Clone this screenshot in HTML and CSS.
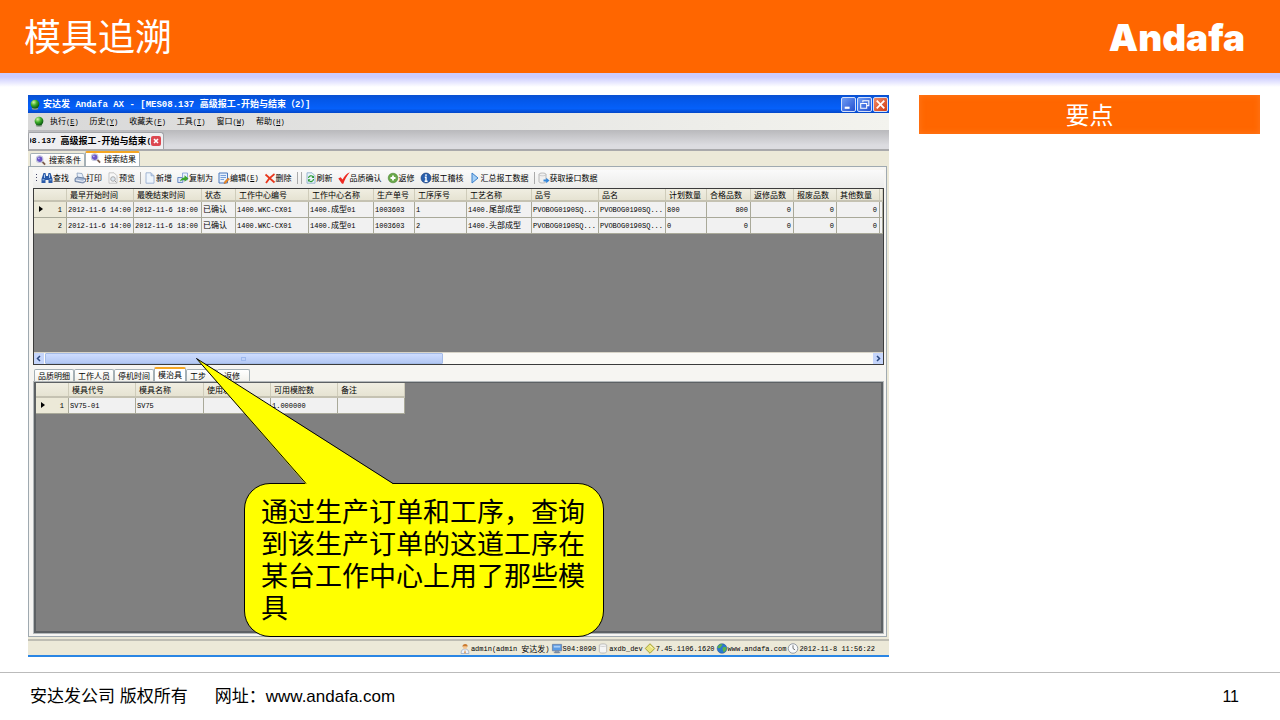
FILE: index.html
```html
<!DOCTYPE html>
<html lang="zh-CN">
<head>
<meta charset="utf-8">
<title>模具追溯</title>
<link rel="stylesheet" href="styles.css">
</head>
<body>
<svg class="defs" aria-hidden="true">
  <defs>
    <radialGradient id="ball" cx=".35" cy=".3" r=".7"><stop offset="0" stop-color="#d5f5a8"/><stop offset=".5" stop-color="#3fae2a"/><stop offset="1" stop-color="#0c5a12"/></radialGradient>
    <symbol id="i-app" viewBox="0 0 12 12"><ellipse cx="6" cy="10.5" rx="3.5" ry="1.2" fill="#8a9a8a"/><circle cx="6" cy="5.5" r="4.8" fill="url(#ball)"/></symbol>
    <symbol id="i-search" viewBox="0 0 12 12"><path d="M6.5 6.5l4 4" stroke="#7a5a4a" stroke-width="2"/><circle cx="4.5" cy="4.5" r="3.6" fill="#6a55c8" stroke="#c4c8dc" stroke-width="1.2"/><circle cx="3.6" cy="3.6" r="1" fill="#b9b0f4"/></symbol>
    <symbol id="i-find" viewBox="0 0 12 12"><path d="M2.5 1h2l.6 3h1.800l.6-3h2l2 6v4H7.500V8h-3v3H.5V7z" fill="#2a5aa8"/><path d="M1.500 7.800h2M8.500 7.800h2M3.500 2.500v3.500M8.500 2.500v3.500" stroke="#a9ccf2"/></symbol>
    <symbol id="i-print" viewBox="0 0 12 12"><path d="M3 1l5 .5L9.500 6h-6z" fill="#e8f0fa" stroke="#7c93b5" stroke-width=".7"/><path d="M1 6.500L3.500 5l8 1.500v3L9 11 1 9.500z" fill="#a6b8d4" stroke="#4d6286" stroke-width=".7"/><path d="M2 8l6.500 1.300 2.500-1" stroke="#fff" stroke-width=".8" fill="none"/></symbol>
    <symbol id="i-page" viewBox="0 0 12 12"><path d="M2 .8h5l3 3v7.400H2z" fill="#eef5fd" stroke="#8fa7cc" stroke-width=".8"/><path d="M7 .8v3h3" fill="#bdd0ec" stroke="#8fa7cc" stroke-width=".7"/></symbol>
    <symbol id="i-preview" viewBox="0 0 12 12"><path d="M2 .8h5l3 3v7.400H2z" fill="#f8f8f8" stroke="#bbb" stroke-width=".8"/><circle cx="6" cy="7" r="2.300" fill="#dde6ee" stroke="#999" stroke-width=".8"/><path d="M7.500 8.500l2 2" stroke="#999"/></symbol>
    <symbol id="i-copy" viewBox="0 0 12 12"><path d="M.8 5.500h5v5h-5z" fill="#dbe7fa" stroke="#4c74b8" stroke-width=".8"/><path d="M5.500 1h5v7h-5z" fill="#eaf2fd" stroke="#7d9bd0" stroke-width=".8"/><path d="M3 9.500c1-3.500 3-4 4.500-4V3.200L11.500 6.500 7.500 9.800V8C6 8 4.500 8 3 9.500z" fill="#3da52c"/></symbol>
    <symbol id="i-edit" viewBox="0 0 12 12"><path d="M1 1h8.500v10H1z" fill="#e7f0fc" stroke="#4b78bd"/><path d="M2.500 3.500H8M2.500 5.500H8M2.500 7.500H6" stroke="#5c8bd0" stroke-width=".8"/><path d="M11.500 7L8 11l-2 .8.500-2L10 6z" fill="#ee8a24" stroke="#b65c10" stroke-width=".4"/></symbol>
    <symbol id="i-del" viewBox="0 0 12 12"><path d="M1.500 2.500l9 8M10.500 2C7 4.500 4 7.500 2 11" stroke="#e8371c" stroke-width="1.700" fill="none"/></symbol>
    <symbol id="i-refresh" viewBox="0 0 12 12"><path d="M2 .8h5l3 3v7.400H2z" fill="#eaf4fb" stroke="#86a8c8" stroke-width=".8"/><path d="M3.500 6A2.500 2.500 0 0 1 8 4.800M8.500 7A2.500 2.500 0 0 1 4 8.500" stroke="#2c9a35" stroke-width="1.200" fill="none"/><path d="M9 3.500v2.600H6.500zM3 10V7.300h2.600z" fill="#2c9a35"/></symbol>
    <symbol id="i-check" viewBox="0 0 12 12"><path d="M.3 6.500l2.300-1.300 2 2.300C6.300 4.300 8.300 1.800 11.800.2 8.800 4 6.800 7.500 5.300 11.800H4z" fill="#ee2a22"/></symbol>
    <symbol id="i-plus" viewBox="0 0 12 12"><circle cx="6" cy="6" r="4.800" fill="#6aa84a" stroke="#4c8534" stroke-width=".6"/><path d="M6 3.500v5M3.500 6h5" stroke="#fff" stroke-width="1.800"/></symbol>
    <symbol id="i-info" viewBox="0 0 12 12"><circle cx="6" cy="6" r="5" fill="#285fae" stroke="#16386e" stroke-width=".6"/><path d="M6 2.300v1.700M4.800 5.300H6v4M4.600 9.300h3" stroke="#fff" stroke-width="1.400" fill="none"/></symbol>
    <symbol id="i-play" viewBox="0 0 9 12"><path d="M1.500 1v10L7.500 6z" fill="#a5d0f7" stroke="#3b7fca"/></symbol>
    <symbol id="i-get" viewBox="0 0 12 12"><path d="M1 2.500C1 .5 8 .5 8 2.500v7c0 2-7 2-7 0z" fill="#f0f0f0" stroke="#aaa" stroke-width=".8"/><path d="M1 2.500c0 1.700 7 1.700 7 0" fill="none" stroke="#bbb" stroke-width=".7"/><path d="M5.500 7.500h2.700V5.700L11.500 8.500 8.200 11.300V9.600H5.500z" fill="#3587d9"/></symbol>
    <symbol id="i-user" viewBox="0 0 12 12"><path d="M1.800 11.500c0-4 2-5 4.200-5s4.200 1 4.200 5z" fill="#eef2fa" stroke="#8797b5" stroke-width=".7"/><circle cx="6" cy="4" r="2.500" fill="#f5c793"/><path d="M3.200 4C3 .5 9 .2 8.900 3.700 7 3.800 5 3 3.200 4z" fill="#c9792f"/><path d="M6 7l-.8 3.500.8 1 .8-1z" fill="#d9802b"/></symbol>
    <symbol id="i-pc" viewBox="0 0 12 12"><path d="M1 1.500h10v7H1z" fill="#5b9be4" stroke="#6f86a8"/><path d="M2.500 3h7v2h-7z" fill="#a9cdf5"/><path d="M4 9h4v1.500H4zM2.500 10.500h7" stroke="#7688a0" fill="#a9b6c8"/></symbol>
    <symbol id="i-db" viewBox="0 0 12 12"><path d="M2 2.500c0-2 8-2 8 0v7c0 2-8 2-8 0z" fill="#f5f5f5" stroke="#aaa" stroke-width=".8"/><path d="M2 2.500c0 1.700 8 1.700 8 0" fill="none" stroke="#bbb" stroke-width=".7"/></symbol>
    <symbol id="i-tag" viewBox="0 0 12 12"><path d="M6 .8L11.200 6 6 11.200.8 6z" fill="#e9e37c" stroke="#9c9a2c"/><path d="M6 3L9 6" stroke="#fffbd0"/></symbol>
    <symbol id="i-globe" viewBox="0 0 12 12"><circle cx="6" cy="6" r="5.300" fill="#2c78cf" stroke="#1c4b86" stroke-width=".5"/><path d="M2 3c2-2 4-2 4.500-1.200C6 3 5 3.500 4.500 5 3.500 6 2 5.500 1.200 5.500zM7 5c2-1 3.500-.5 3.800.8C10.500 8.500 9 10 7.800 10 7 8.500 6 6.500 7 5z" fill="#5cb548"/></symbol>
    <symbol id="i-clock" viewBox="0 0 12 12"><circle cx="6" cy="6" r="5.200" fill="#f7f9fb" stroke="#8c949e"/><path d="M6 2.500V6l2.300 1.500" stroke="#444" fill="none" stroke-width=".8"/></symbol>
  </defs>
</svg>

<div class="slide">
  <header class="banner">
    <h1>模具追溯</h1>
    <div class="brand">Andafa</div>
  </header>

  <main class="content">
    <section class="shot">
      <div class="window">
        <div class="titlebar">
          <svg class="ic"><use href="#i-app"/></svg>
          <span class="caption">安达发<span class="lat"> Andafa AX - [MES08.137 </span>高级报工<span class="lat">-</span>开始与结束（<span class="lat">2</span>）<span class="lat">]</span></span>
          <button class="wb" aria-label="最小化"><svg viewBox="0 0 12 12"><path d="M2.500 9h4.500" stroke="#fff" stroke-width="2"/></svg></button>
          <button class="wb" aria-label="还原"><svg viewBox="0 0 12 12"><path d="M4.500 4V2.500H10V7H8.500M2.500 5H8v4.500H2.500z" stroke="#fff" fill="none"/></svg></button>
          <button class="wb close" aria-label="关闭"><svg viewBox="0 0 12 12"><path d="M2.500 2.500l7 7M9.500 2.500l-7 7" stroke="#fff" stroke-width="1.600"/></svg></button>
        </div>

        <nav class="menubar">
          <svg class="ic"><use href="#i-app"/></svg>
          <button>执行<span class="lat">(<u>E</u>)</span></button>
          <button>历史<span class="lat">(<u>Y</u>)</span></button>
          <button>收藏夹<span class="lat">(<u>F</u>)</span></button>
          <button>工具<span class="lat">(<u>T</u>)</span></button>
          <button>窗口<span class="lat">(<u>W</u>)</span></button>
          <button>帮助<span class="lat">(<u>H</u>)</span></button>
        </nav>

        <div class="doctabs">
          <div class="doctab">
            <span class="doctext"><span class="lat">08.137 </span>高级报工<span class="lat">-</span>开始与结束<span class="lat">(</span></span>
            <button class="tabclose" aria-label="关闭标签"><svg viewBox="0 0 10 10"><path d="M3 3l4 4M7 3l-4 4" stroke="#fff" stroke-width="1.600"/></svg></button>
          </div>
        </div>

        <div class="tabs main-tabs">
          <button class="tab"><svg class="ic"><use href="#i-search"/></svg>搜索条件</button>
          <button class="tab on"><svg class="ic"><use href="#i-search"/></svg>搜索结果</button>
        </div>

        <div class="panel">
          <div class="toolbar">
            <span class="grip"></span>
            <button><svg class="ic"><use href="#i-find"/></svg>查找</button>
            <button><svg class="ic"><use href="#i-print"/></svg>打印</button>
            <button><svg class="ic"><use href="#i-preview"/></svg>预览</button>
            <span class="sep"></span>
            <button><svg class="ic"><use href="#i-page"/></svg>新增</button>
            <button><svg class="ic"><use href="#i-copy"/></svg>复制为</button>
            <button><svg class="ic"><use href="#i-edit"/></svg>编辑<span class="lat">(<u>E</u>)</span></button>
            <button><svg class="ic"><use href="#i-del"/></svg>删除</button>
            <span class="sep double"></span>
            <button><svg class="ic"><use href="#i-refresh"/></svg>刷新</button>
            <button><svg class="ic"><use href="#i-check"/></svg>品质确认</button>
            <button><svg class="ic"><use href="#i-plus"/></svg>返修</button>
            <button><svg class="ic"><use href="#i-info"/></svg>报工稽核</button>
            <button><svg class="ic"><use href="#i-play"/></svg>汇总报工数据</button>
            <span class="sep"></span>
            <button><svg class="ic"><use href="#i-get"/></svg>获取接口数据</button>
          </div>

          <div class="grid upper">
            <table>
              <colgroup><col class="w33"><col class="w67"><col class="w68"><col class="w34"><col class="w73"><col class="w65"><col class="w41"><col class="w52"><col class="w65"><col class="w67"><col class="w67"><col class="w41"><col class="w44"><col class="w43"><col class="w43"><col class="w43"><col></colgroup>
              <thead><tr><th></th><th>最早开始时间</th><th>最晚结束时间</th><th>状态</th><th>工作中心编号</th><th>工作中心名称</th><th>生产单号</th><th>工序序号</th><th>工艺名称</th><th>品号</th><th>品名</th><th>计划数量</th><th>合格品数</th><th>返修品数</th><th>报废品数</th><th>其他数量</th><th></th></tr></thead>
              <tbody>
                <tr><th class="cur">1</th><td>2012-11-6 14:00</td><td>2012-11-6 18:00</td><td><span class="cjk">已确认</span></td><td>1400.WKC-CX01</td><td>1400.<span class="cjk">成型</span>01</td><td>1003603</td><td>1</td><td>1400.<span class="cjk">尾部成型</span></td><td>PVOBOG0190SQ...</td><td>PVOBOG0190SQ...</td><td>800</td><td class="num">800</td><td class="num">0</td><td class="num">0</td><td class="num">0</td><td></td></tr>
                <tr><th>2</th><td>2012-11-6 14:00</td><td>2012-11-6 18:00</td><td><span class="cjk">已确认</span></td><td>1400.WKC-CX01</td><td>1400.<span class="cjk">成型</span>01</td><td>1003603</td><td>2</td><td>1400.<span class="cjk">头部成型</span></td><td>PVOBOG0190SQ...</td><td>PVOBOG0190SQ...</td><td>0</td><td class="num">0</td><td class="num">0</td><td class="num">0</td><td class="num">0</td><td></td></tr>
              </tbody>
            </table>
            <div class="scroll">
              <button aria-label="向左滚动"><svg viewBox="0 0 10 10"><path d="M6 2.500L3.500 5 6 7.500" stroke="#2d4a80" stroke-width="1.500" fill="none"/></svg></button>
              <div class="track"><div class="thumb"><i></i></div></div>
              <button aria-label="向右滚动"><svg viewBox="0 0 10 10"><path d="M4 2.500L6.500 5 4 7.500" stroke="#2d4a80" stroke-width="1.500" fill="none"/></svg></button>
            </div>
          </div>

          <div class="tabs sub-tabs">
            <button class="tab">品质明细</button>
            <button class="tab">工作人员</button>
            <button class="tab">停机时间</button>
            <button class="tab on">模治具</button>
            <button class="tab">工步</button>
            <button class="tab">返修</button>
          </div>

          <div class="grid lower">
            <table>
              <colgroup><col class="w33"><col class="w67"><col class="w68"><col class="w67"><col class="w67"><col class="w67"></colgroup>
              <thead><tr><th></th><th>模具代号</th><th>模具名称</th><th>使用次数</th><th>可用模腔数</th><th>备注</th></tr></thead>
              <tbody><tr><th class="cur">1</th><td>SV75-01</td><td>SV75</td><td></td><td>1.000000</td><td></td></tr></tbody>
            </table>
          </div>
        </div>

        <footer class="status">
          <span><svg class="ic"><use href="#i-user"/></svg>admin(admin <span class="cjk">安达发</span>)</span>
          <span><svg class="ic"><use href="#i-pc"/></svg>S04:8090</span>
          <span><svg class="ic"><use href="#i-db"/></svg>axdb_dev</span>
          <span><svg class="ic"><use href="#i-tag"/></svg>7.45.1106.1620</span>
          <span><svg class="ic"><use href="#i-globe"/></svg>www.andafa.com</span>
          <span><svg class="ic"><use href="#i-clock"/></svg>2012-11-8 11:56:22</span>
        </footer>
      </div>

      <div class="callout">
        <svg class="tail" viewBox="0 0 200 128"><path d="M110 127.500L0.500 1.500 198 127.500z" fill="#ff0"/><path d="M110 126.500L0.500 1.500 197 126.500" fill="none" stroke="#000"/></svg>
        <p>通过生产订单和工序，查询到该生产订单的这道工序在某台工作中心上用了那些模具</p>
      </div>
    </section>

    <aside>
      <h2>要点</h2>
    </aside>
  </main>

  <footer class="foot">
    <span class="copy">安达发公司 版权所有</span>
    <span class="site">网址：www.andafa.com</span>
    <span class="page">11</span>
  </footer>
</div>
</body>
</html>
```

FILE: styles.css
```css
* { box-sizing: border-box; }
body { margin: 0; background: #fff; color: #000; font-family: "Liberation Sans", "Noto Sans CJK SC", sans-serif; }
h1, h2, p { margin: 0; font-weight: 400; }
button { margin: 0; padding: 0; border: 0; background: none; color: inherit; font: inherit; }
.defs { position: absolute; width: 0; height: 0; }
.slide { display: flex; flex-direction: column; min-height: 100vh; }

.banner { display: flex; justify-content: space-between; align-items: center; height: 73px; padding: 0 35px 2px 24px; background: #f60; color: #fff; }
.banner h1 { font: 400 37px/71px "Noto Sans CJK SC", sans-serif; }
.brand { font: 900 37px/71px Inter, "Liberation Sans", sans-serif; padding-top: 4px; }

.content { flex: 1; display: grid; grid-template-columns: minmax(0, 1fr) 341px; gap: 30px; padding: 22px 20px 15px 28px; background: linear-gradient(#ccf 0, #ccf 4px, #fff 14px); }
aside h2 { height: 39px; background: #f60; box-shadow: inset 0 0 6px #ff7a20; color: #fff; text-align: center; font: 400 24px/37px "Noto Sans CJK SC", sans-serif; }

.shot { position: relative; display: flex; }
.window { flex: 1; min-width: 0; display: flex; flex-direction: column; background: #ece9d8; border-bottom: 2px solid #2a86e4; font: 8px/12px "Noto Sans CJK SC", sans-serif; white-space: nowrap; }
.ic { width: 12px; height: 11px; flex: none; }
.lat { font-family: "Liberation Mono", monospace; font-size: 7px; }
.cjk { font-family: "Noto Sans CJK SC", sans-serif; font-size: 8px; }

.titlebar { display: flex; align-items: center; gap: 1px; height: 18px; padding: 0 1px 0 1px; background: linear-gradient(#0a50d0, #0458ea 30%, #0560fa 75%, #0347c8); color: #fff; }
.caption { flex: 1; padding-left: 1px; font-size: 9px; font-weight: 700; }
.caption .lat { font-size: 9px; white-space: pre; }
.doctext .lat { font-size: 8px; white-space: pre; }
.wb { width: 15px; height: 15px; border: 1px solid #d4e0fa; border-radius: 2px; background: linear-gradient(135deg, #6f9cf4, #2450d0); display: flex; }
.wb.close { background: linear-gradient(135deg, #ee8a68, #d23c14); }
.wb svg { width: 13px; height: 13px; }

.menubar { display: flex; align-items: center; gap: 11px; height: 17px; padding-left: 5px; background: linear-gradient(90deg, #d8d8d8, #f3f3ee); }
.menubar .ic { margin-right: -6px; }

.doctabs { height: 21px; padding-top: 2px; background: linear-gradient(#b9b9bc, #dcdce0 80%); border-bottom: 2px solid #a9a9ab; }
.doctab { display: inline-flex; align-items: center; height: 17px; padding: 0 2px 0 1px; border: 1px solid #a2a4a8; border-bottom: 0; border-radius: 2px 3px 0 0; background: #efeff1; }
.doctext { width: 121px; overflow: hidden; display: flex; font-size: 9px; font-weight: 700; }
.doctext .lat { flex: none; }
.doctext .lat:first-child { margin-left: -3px; }
.tabclose { width: 10px; height: 10px; border-radius: 2px; background: #dc4750; display: flex; }

.tabs { display: flex; align-items: flex-end; }
.tab { display: flex; align-items: center; justify-content: center; height: 13px; padding: 0 3px; border: 1px solid #a5b0b5; border-bottom: 0; border-radius: 2px 2px 0 0; background: linear-gradient(#fff, #f1f0ea); }
.tab.on { height: 15px; padding-bottom: 2px; border-top: 2px solid #f5a623; background: #fff; }
.main-tabs { height: 15px; padding-left: 2px; }
.main-tabs .tab { padding-left: 4px; gap: 2px; }

.panel { flex: 1; display: flex; flex-direction: column; margin: 0 2px 2px 0; padding: 3px 2px 3px 4px; border: 1px solid #9fa9b0; background: #f6f5f2; }
.toolbar { display: flex; align-items: center; gap: 5px; height: 18px; padding: 0 0 2px 3px; background: linear-gradient(#fafafa, #ececea); }
.toolbar button { display: flex; align-items: center; }
.toolbar .ic { height: 12px; }
.grip { width: 1px; height: 9px; margin-right: -1px; background: repeating-linear-gradient(#446 0, #446 1px, transparent 1px, transparent 3px); }
.sep { width: 1px; height: 12px; margin-right: -2px; background: #aaa; }
.sep.double { width: 5px; background: none; border: solid #aaa; border-width: 0 1px; }

.grid { display: flex; flex-direction: column; background: #808080; border: 1px solid #3c3c3c; overflow: hidden; }
.upper { height: 177px; }
.lower { flex: 1; margin: 0 1px; border: 2px solid #5d6164; border-width: 1px 2px 2px; outline: 1px solid #b4b9bb; }
.grid table { border-collapse: separate; border-spacing: 0; table-layout: fixed; }
.upper table { width: 100%; }
.lower table { width: 369px; }
thead th { height: 13px; padding: 0 0 0 3px; text-align: left; font-weight: 400; line-height: 10px; overflow: hidden; background: linear-gradient(#f0eee2, #e6e3d2); border-bottom: 2px solid #c5c2b2; box-shadow: inset -1px 0 #cfccba; }
.lower thead th { height: 15px; }
tbody th, td { height: 16px; padding: 0 0 0 1px; line-height: 12px; font-family: "Liberation Mono", monospace; font-size: 7px; font-weight: 400; overflow: hidden; background: #f1f1f1; border: solid #a9a999; border-width: 0 1px 1px 0; }
tbody th { padding-right: 4px; text-align: right; background: #ece9d8; }
.cur::before { content: ""; float: left; margin: 2px 0 0 4px; border: solid transparent; border-width: 3px 0 3px 4px; border-left-color: #000; }
.num { text-align: right; padding-right: 2px; }
.w33 { width: 33px; } .w34 { width: 34px; } .w41 { width: 41px; } .w43 { width: 43px; } .w44 { width: 44px; }
.w52 { width: 52px; } .w65 { width: 65px; } .w67 { width: 67px; } .w68 { width: 68px; } .w73 { width: 73px; }

.scroll { display: flex; height: 12px; margin-top: auto; background: #fbfaf6; border-top: 1px solid #d8d4c8; }
.scroll button { width: 10px; height: 11px; background: #c5d5fb; display: flex; }
.track { flex: 1; }
.thumb { width: 48%; height: 11px; margin-left: 1px; border: 1px solid #a5bce8; border-radius: 1px; background: linear-gradient(#cddcff, #b3c8f4); display: flex; justify-content: center; align-items: center; }
.thumb i { width: 5px; height: 4px; border: 1px solid #9db8ee; }

.sub-tabs { height: 17px; padding-left: 1px; }
.sub-tabs .tab:last-child { padding: 0 9px 0 6px; }
.sub-tabs .tab:nth-child(5) { padding: 0 10px 0 3px; }

.status { display: flex; justify-content: flex-end; align-items: center; gap: 1px; height: 16px; padding: 1px 14px 0 0; border-top: 2px solid #bebdb3; font-family: "Liberation Mono", monospace; font-size: 7px; }
.status > span { display: flex; align-items: center; white-space: pre; }

.callout { position: absolute; left: 216px; top: 388px; width: 360px; padding: 11px 15px 13px 16px; border: 1px solid #000; border-radius: 26px; background: #ff0; font: 300 27px/32px "Noto Sans CJK SC", sans-serif; }
.tail { position: absolute; left: -49px; top: -127px; width: 200px; height: 128px; }

.foot { display: flex; align-items: center; height: 48px; padding: 0 41px 0 30px; border-top: 1px solid #bbb; font: 400 17px/24px "Liberation Sans", "Noto Sans CJK SC", sans-serif; }
.site { margin-left: 27px; }
.page { margin-left: auto; font-size: 16px; }
```
